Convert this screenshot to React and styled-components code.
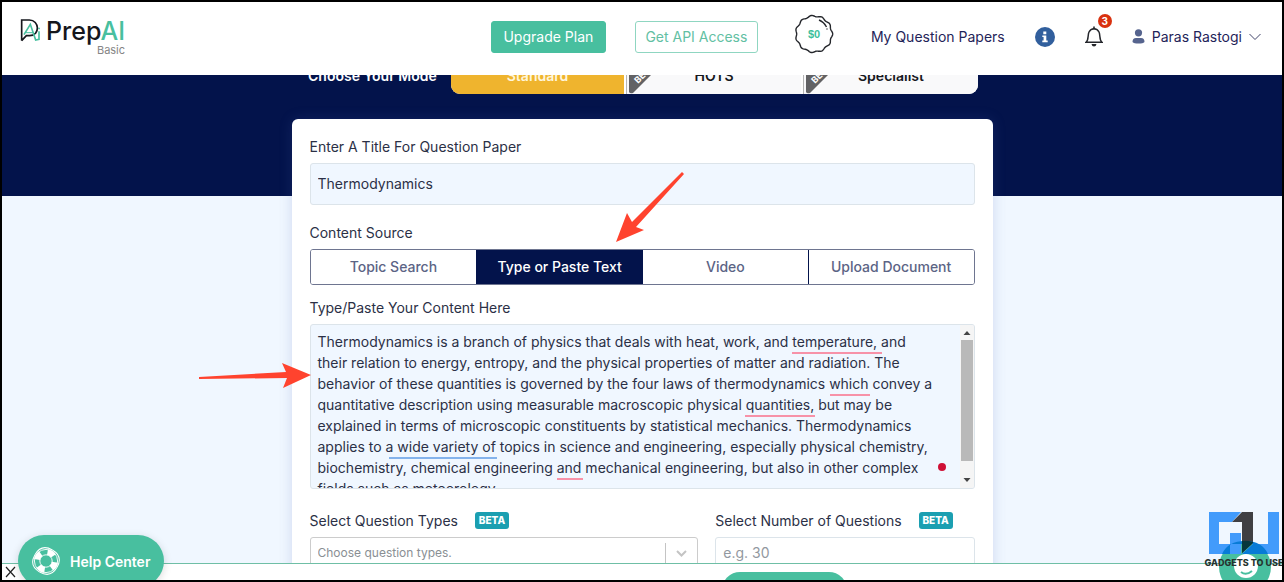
import React from "react";
import styled, { createGlobalStyle, css } from "styled-components";

const c = {
  navy: "#03134b",
  ink: "#2b3046",
  link: "#1f2459",
  green: "#48bf9f",
  pale: "#f0f7ff",
  line: "#dce4ea",
  red: "#ff432e",
};

const GlobalStyle = createGlobalStyle`
  *, *::before, *::after { box-sizing: border-box; }
  body { margin: 0; }
  body, button, input, select, textarea {
    font-family: Inter, "Liberation Sans", sans-serif;
    font-size: 14px;
    color: ${c.ink};
  }
`;

const Frame = styled.div`
  position: relative;
  display: grid;
  grid-template-rows: auto 1fr auto;
  height: 100vh;
  border: 2px solid #000;
  overflow: hidden;
  background: #fff;
`;

const Header = styled.header`
  position: relative;
  z-index: 2;
  display: flex;
  align-items: center;
  height: 73px;
  padding: 0 21px 4px 18px;
  background: #fff;
`;

const Logo = styled.a`
  display: grid;
  grid-template-columns: auto auto;
  column-gap: 5px;
  align-items: center;
  margin-right: auto;
  color: #15171c;
  text-decoration: none;
`;

const Brand = styled.span`
  font-size: 25px;
  line-height: 26px;
  font-weight: 500;
  em { font-style: normal; color: ${c.green}; }
`;

const Tier = styled.span`
  grid-column: 2;
  justify-self: end;
  font-size: 11px;
  line-height: 12px;
  color: #858585;
`;

const HeaderButton = styled.button`
  height: 32px;
  width: ${(p) => (p.$solid ? 115 : 123)}px;
  margin-right: ${(p) => (p.$solid ? 29 : 36)}px;
  padding: 0;
  border: 1px solid ${(p) => (p.$solid ? c.green : "#8fd6c1")};
  border-radius: 3px;
  background: ${(p) => (p.$solid ? c.green : "#fff")};
  color: ${(p) => (p.$solid ? "#fff" : "#62bfa3")};
  white-space: nowrap;
`;

const Coin = styled.svg`
  width: 40px;
  height: 40px;
  margin: 0 37px 6px 0;
`;

const NavLink = styled.a`
  color: ${c.link};
  text-decoration: none;
  white-space: nowrap;
`;

const IconButton = styled.button`
  position: relative;
  display: flex;
  margin-left: ${(p) => p.$gap}px;
  padding: 0;
  border: 0;
  background: none;
`;

const Count = styled.span`
  position: absolute;
  top: -12px;
  right: -9px;
  width: 14px;
  border-radius: 7px;
  background: #d9310f;
  color: #fff;
  font-size: 10px;
  line-height: 14px;
  font-weight: 700;
`;

const UserMenu = styled.button`
  display: flex;
  align-items: center;
  gap: 7px;
  margin-left: 29px;
  padding: 0;
  border: 0;
  background: none;
  color: ${c.link};
  white-space: nowrap;
`;

const Main = styled.main`
  min-height: 0;
  overflow: hidden;
  padding: 0 16px;
  background: linear-gradient(${c.navy} 121px, ${c.pale} 121px);
`;

const ModeRow = styled.div`
  display: flex;
  align-items: center;
  justify-content: space-between;
  max-width: 672px;
  height: 38px;
  margin: -19px auto 25px;
  padding-left: 2px;
`;

const ModeLabel = styled.span`
  color: #fff;
  font-weight: 600;
  white-space: nowrap;
`;

const ModeGroup = styled.div`
  display: grid;
  grid-template-columns: 173px 1fr 1fr;
  gap: 2px;
  width: 527px;
  height: 38px;
  border-radius: 9px;
  overflow: hidden;
  background: #fff;
`;

const ModeButton = styled.button`
  position: relative;
  padding: 1px 0 0;
  border: 0;
  font-weight: 600;
  ${(p) =>
    p.$active
      ? css`background: #efb42e; color: #fff6dc;`
      : css`background: #f9f9fa; border-left: 1px solid #b5b5b5; color: #16181d;`}
`;

const Ribbon = styled.svg`
  position: absolute;
  left: 2px;
  bottom: 0;
`;

const Card = styled.form`
  position: relative;
  max-width: 701px;
  margin: 0 auto;
  padding: 17px 18px;
  border-radius: 6px;
  background: #fff;
  box-shadow: 0 0 14px rgba(80, 100, 180, 0.2);
`;

const Field = styled.div`
  margin-bottom: ${(p) => p.$gap || 0}px;
`;

const Label = styled.label`
  display: flex;
  align-items: center;
  gap: 17px;
  height: 21px;
  margin-bottom: 6px;
  white-space: nowrap;
`;

const inputLook = css`
  display: block;
  width: 100%;
  padding: 0 7px 2px;
  border: 1px solid ${c.line};
  border-radius: 3px;
  outline: 0;
`;

const TitleInput = styled.input`
  ${inputLook}
  height: 42px;
  background: ${c.pale};
`;

const Tabs = styled.div`
  display: grid;
  grid-template-columns: repeat(4, 1fr);
  height: 36px;
  border: 1px solid #6e7590;
  border-radius: 3px;
  overflow: hidden;
`;

const Tab = styled.button`
  padding: 0 0 2px;
  border: 0;
  font-weight: 500;
  white-space: nowrap;
  background: ${(p) => (p.$active ? c.navy : "#fff")};
  color: ${(p) => (p.$active ? "#fff" : "#5c6485")};
  & + & { border-left: 1px solid ${(p) => (p.$active ? c.navy : "#6e7590")}; }
`;

const Editor = styled.div`
  position: relative;
  display: flex;
  height: 165px;
  border: 1px solid ${c.line};
  border-radius: 3px;
  overflow: hidden;
  background: ${c.pale};
`;

const EditorText = styled.textarea`
  flex: 1;
  min-width: 0;
  padding: 6px 0 0 7px;
  border: 0;
  outline: 0;
  resize: none;
  overflow: hidden;
  background: transparent;
  line-height: 21px;
  white-space: pre;
`;

const Mark = styled.span`
  position: absolute;
  top: ${(p) => 6 + p.$row * 21}px;
  left: ${(p) => p.$x}px;
  width: ${(p) => p.$w}px;
  height: 2px;
  background: ${(p) => p.$color || "#f792a8"};
`;

const Dot = styled.span`
  position: absolute;
  top: 138px;
  right: 28px;
  width: 8px;
  height: 8px;
  border-radius: 4px;
  background: #cf1036;
`;

const Scrollbar = styled.div`
  display: flex;
  flex-direction: column;
  align-items: center;
  width: 14px;
  background: #f5f5f5;
  svg { flex: none; margin: 4px 0; }
  svg:last-child { margin-top: auto; }
`;

const Thumb = styled.div`
  width: 12px;
  height: 121px;
  background: #b9b9b9;
`;

const Columns = styled.div`
  display: grid;
  grid-template-columns: 3fr 2fr;
  gap: 17px;
`;

const Beta = styled.span`
  width: 34px;
  border-radius: 3px;
  background: #1b9fb1;
  color: #fff;
  font-size: 10px;
  line-height: 17px;
  font-weight: 800;
  text-align: center;
`;

const SelectBox = styled.div`
  position: relative;
  svg { position: absolute; right: 0; top: 0; pointer-events: none; }
`;

const Select = styled.select`
  ${inputLook}
  height: 32px;
  appearance: none;
  background: #fff;
  border-color: #ccc;
  color: #8a8f94;
  font-size: 12px;
`;

const NumberInput = styled.input`
  ${inputLook}
  height: 32px;
  background: #fff;
  &::placeholder { color: #9298a0; opacity: 1; }
`;

const Arrow = styled.svg`
  position: absolute;
  z-index: 1;
  left: ${(p) => p.$x}px;
  top: ${(p) => p.$y}px;
  fill: ${c.red};
  pointer-events: none;
`;

const PromoBar = styled.footer`
  display: flex;
  justify-content: space-between;
  height: 17px;
  overflow: hidden;
  border-top: 1px solid #6fbfa6;
  background: #fff;
`;

const CloseButton = styled.button`
  display: flex;
  padding: 2px 3px;
  border: 0;
  background: none;
`;

const PromoButton = styled.button`
  width: 125px;
  height: 36px;
  margin: 8px 435px 0 0;
  border: 0;
  border-radius: 18px;
  background: ${c.green};
`;

const HelpButton = styled.button`
  position: absolute;
  z-index: 3;
  left: 16px;
  bottom: -7px;
  display: flex;
  align-items: center;
  gap: 9px;
  width: 146px;
  height: 52px;
  padding: 0 0 0 13px;
  border: 0;
  border-radius: 26px;
  background: ${c.green};
  box-shadow: 0 2px 8px rgba(0, 0, 0, 0.15);
  color: #fff;
  font-weight: 600;
  white-space: nowrap;
`;

const Watermark = styled.svg`
  position: absolute;
  z-index: 3;
  right: -2px;
  bottom: 0;
`;

const content = [
  "Thermodynamics is a branch of physics that deals with heat, work, and temperature, and",
  "their relation to energy, entropy, and the physical properties of matter and radiation. The",
  "behavior of these quantities is governed by the four laws of thermodynamics which convey a",
  "quantitative description using measurable macroscopic physical quantities, but may be",
  "explained in terms of microscopic constituents by statistical mechanics. Thermodynamics",
  "applies to a wide variety of topics in science and engineering, especially physical chemistry,",
  "biochemistry, chemical engineering and mechanical engineering, but also in other complex",
  "fields such as meteorology.",
].join("\n");

const scallops =
  "M" +
  Array.from({ length: 120 }, (_, i) => {
    const t = (i / 120) * Math.PI * 2;
    const r = 18 + 0.7 * Math.cos(t * 11);
    return `${(20 + r * Math.cos(t)).toFixed(2)} ${(20 + r * Math.sin(t)).toFixed(2)}`;
  }).join("L") +
  "Z";

function BetaRibbon() {
  return (
    <Ribbon width="42" height="38" viewBox="0 0 42 38" aria-hidden="true">
      <path d="M0 12V36Q1 38 4 37L41 0H12Z" fill="#626264" />
      <text x="9" y="28" transform="rotate(-45 9 28)" fontSize="9" fontWeight="700" fill="#fff">BETA</text>
    </Ribbon>
  );
}

function LifeRing() {
  return (
    <svg width="30" height="30" viewBox="0 0 30 30" fill="none" stroke="#fff" aria-hidden="true">
      <circle cx="15" cy="15" r="9" strokeWidth="6" strokeDasharray="7.07 7.07" transform="rotate(8 15 15)" />
      <circle cx="15" cy="15" r="11.600" strokeWidth="0.900" />
      <circle cx="15" cy="15" r="6.200" strokeWidth="0.900" />
      {[75, 165, 255, 345].map((a) => (
        <path key={a} d="M24 6Q33 15 24 24" strokeWidth="1" transform={`rotate(${a} 15 15)`} />
      ))}
    </svg>
  );
}

export default function App() {
  return (
    <>
      <GlobalStyle />
      <Frame>
        <Header>
          <Logo href="#">
            <svg width="21" height="25" viewBox="0 0 63 75" fill="none" strokeWidth="5" aria-hidden="true">
              <path d="M5 68V6H28C59 6 61 53 29 53H19L5 68" stroke="#15171c" />
              <path d="M12 50L31 19L47 66L57 64V40M57 29V34" stroke={c.green} />
              <path d="M18 44H39" stroke={c.green} strokeWidth="3" />
            </svg>
            <Brand>Prep<em>AI</em></Brand>
            <Tier>Basic</Tier>
          </Logo>
          <HeaderButton $solid type="button">Upgrade Plan</HeaderButton>
          <HeaderButton type="button">Get API Access</HeaderButton>
          <Coin viewBox="0 0 40 40" aria-label="Balance">
            <path d={scallops} fill="#fff" stroke="#25272c" strokeWidth="1.400" />
            <path d="M25 6Q30 8 32.500 13M33 14.500V15.500" fill="none" stroke="#25272c" strokeWidth="1.400" />
            <text x="20" y="24" textAnchor="middle" fontFamily="Liberation Sans Narrow, Liberation Sans, sans-serif" fontSize="11" fontWeight="700" fill="#3cbf9b">$0</text>
          </Coin>
          <NavLink href="#">My Question Papers</NavLink>
          <IconButton $gap={30} type="button" aria-label="Information">
            <svg width="20" height="20" viewBox="0 0 20 20">
              <circle cx="10" cy="10" r="10" fill="#315f9d" />
              <path d="M8.300 4.500h3v2.700h-3zM7.300 8.400h4v5.200h1.400v1.700H7.300v-1.700h1.300v-3.500H7.300z" fill="#fff" />
            </svg>
          </IconButton>
          <IconButton $gap={30} type="button" aria-label="Notifications">
            <svg width="18" height="21" viewBox="0 0 18 21">
              <path d="M1 16.300C4 14 2.500 9 4 6Q5.500 3 9 2.700Q12.500 3 14 6C15.500 9 14 14 17 16.300Z" fill="none" stroke="#25272c" strokeWidth="1.500" />
              <path d="M8.200 0.500h1.600v2.500H8.200zM6.500 18h5Q11 20.500 9 20.500T6.500 18Z" fill="#25272c" />
            </svg>
            <Count>3</Count>
          </IconButton>
          <UserMenu type="button">
            <svg width="13" height="15" viewBox="0 0 13 15" fill="#56648e" aria-hidden="true">
              <circle cx="6.500" cy="3.800" r="3.600" />
              <path d="M0.500 13Q0.500 9 4 9H9Q12.500 9 12.500 13Q11 14.500 6.500 14.500T0.500 13Z" />
            </svg>
            Paras Rastogi
            <svg width="12" height="8" viewBox="0 0 12 8" fill="none" stroke="#40456b" aria-hidden="true">
              <path d="M0.500 1L6 6.500L11.500 1" />
            </svg>
          </UserMenu>
        </Header>

        <Main>
          <ModeRow>
            <ModeLabel>Choose Your Mode</ModeLabel>
            <ModeGroup>
              <ModeButton $active type="button">Standard</ModeButton>
              <ModeButton type="button"><BetaRibbon />HOTS</ModeButton>
              <ModeButton type="button"><BetaRibbon />Specialist</ModeButton>
            </ModeGroup>
          </ModeRow>

          <Card>
            <Field $gap={17}>
              <Label htmlFor="title">Enter A Title For Question Paper</Label>
              <TitleInput id="title" defaultValue="Thermodynamics" />
            </Field>
            <Field $gap={12}>
              <Label as="div" id="source">Content Source</Label>
              <Tabs role="group" aria-labelledby="source">
                <Tab type="button">Topic Search</Tab>
                <Tab type="button" $active>Type or Paste Text</Tab>
                <Tab type="button">Video</Tab>
                <Tab type="button">Upload Document</Tab>
              </Tabs>
            </Field>
            <Field $gap={21}>
              <Label htmlFor="content">Type/Paste Your Content Here</Label>
              <Editor>
                <EditorText id="content" spellCheck={false} defaultValue={content} />
                <Mark $row={1} $x={481} $w={90} />
                <Mark $row={3} $x={519} $w={40} />
                <Mark $row={4} $x={434} $w={70} />
                <Mark $row={6} $x={78} $w={108} $color="#84b3ec" />
                <Mark $row={7} $x={246} $w={26} />
                <Dot />
                <Scrollbar aria-hidden="true">
                  <svg width="8" height="7" viewBox="0 0 8 7"><path d="M0.500 6L4 2L7.500 6Z" fill="#444" /></svg>
                  <Thumb />
                  <svg width="8" height="7" viewBox="0 0 8 7"><path d="M0.500 1L4 5L7.500 1Z" fill="#444" /></svg>
                </Scrollbar>
              </Editor>
            </Field>
            <Columns>
              <Field>
                <Label htmlFor="types">Select Question Types <Beta>BETA</Beta></Label>
                <SelectBox>
                  <Select id="types" defaultValue="">
                    <option value="">Choose question types.</option>
                  </Select>
                  <svg width="34" height="32" viewBox="0 0 34 32" fill="none" stroke="#c4c4c4" aria-hidden="true">
                    <path d="M1.500 6V27" />
                    <path d="M13 14L17.500 18.500L22 14" strokeWidth="2" />
                  </svg>
                </SelectBox>
              </Field>
              <Field>
                <Label htmlFor="count">Select Number of Questions <Beta>BETA</Beta></Label>
                <NumberInput id="count" placeholder="e.g. 30" />
              </Field>
            </Columns>
            <Arrow $x={324} $y={53} width="70" height="71" viewBox="0 0 70 71" aria-hidden="true">
              <path d="M0 70L11 41L16 50L66 0L68 2L20 55L28 58Z" />
            </Arrow>
            <Arrow $x={-93} $y={244} width="112" height="26" viewBox="0 0 112 26" aria-hidden="true">
              <path d="M0 14L87 9L83 0L112 12L84 25L88 15L0 16Z" />
            </Arrow>
          </Card>
        </Main>

        <PromoBar>
          <CloseButton type="button" aria-label="Close">
            <svg width="11" height="12" viewBox="0 0 11 12" stroke="#222" strokeWidth="1.200"><path d="M1 1L10 11M10 1L1 11" /></svg>
          </CloseButton>
          <PromoButton type="button" aria-label="Get started" />
        </PromoBar>

        <HelpButton type="button"><LifeRing />Help Center</HelpButton>

        <Watermark width="80" height="70" viewBox="0 0 80 70" role="img" aria-label="Gadgets To Use">
          <circle cx="41" cy="57" r="26" fill={c.green} />
          <path d="M5 2H37L28 12H15V34H26V23H37V44H5ZM38 44L49 34H64V2H75V44Z" fill="#429bfb" />
          <path d="M38 2H49V33L38 43V12H28Z" fill="#3f3f43" />
          <path d="M18 44Q24 31 41 31Q58 31 64 44H38L49 34H26V44Z" fill="#087bd6" />
          <path d="M38 43L49 33V32Q43 30 38 31Z" fill="#07383c" />
          <circle cx="42" cy="56" r="12" fill="#fff" />
          <path d="M37 62Q42 66 48 61" fill="none" stroke={c.green} strokeWidth="2" />
          <text x="40" y="56" textAnchor="middle" fontSize="9" fontWeight="800" fill="#26332f">GADGETS TO USE</text>
        </Watermark>
      </Frame>
    </>
  );
}
